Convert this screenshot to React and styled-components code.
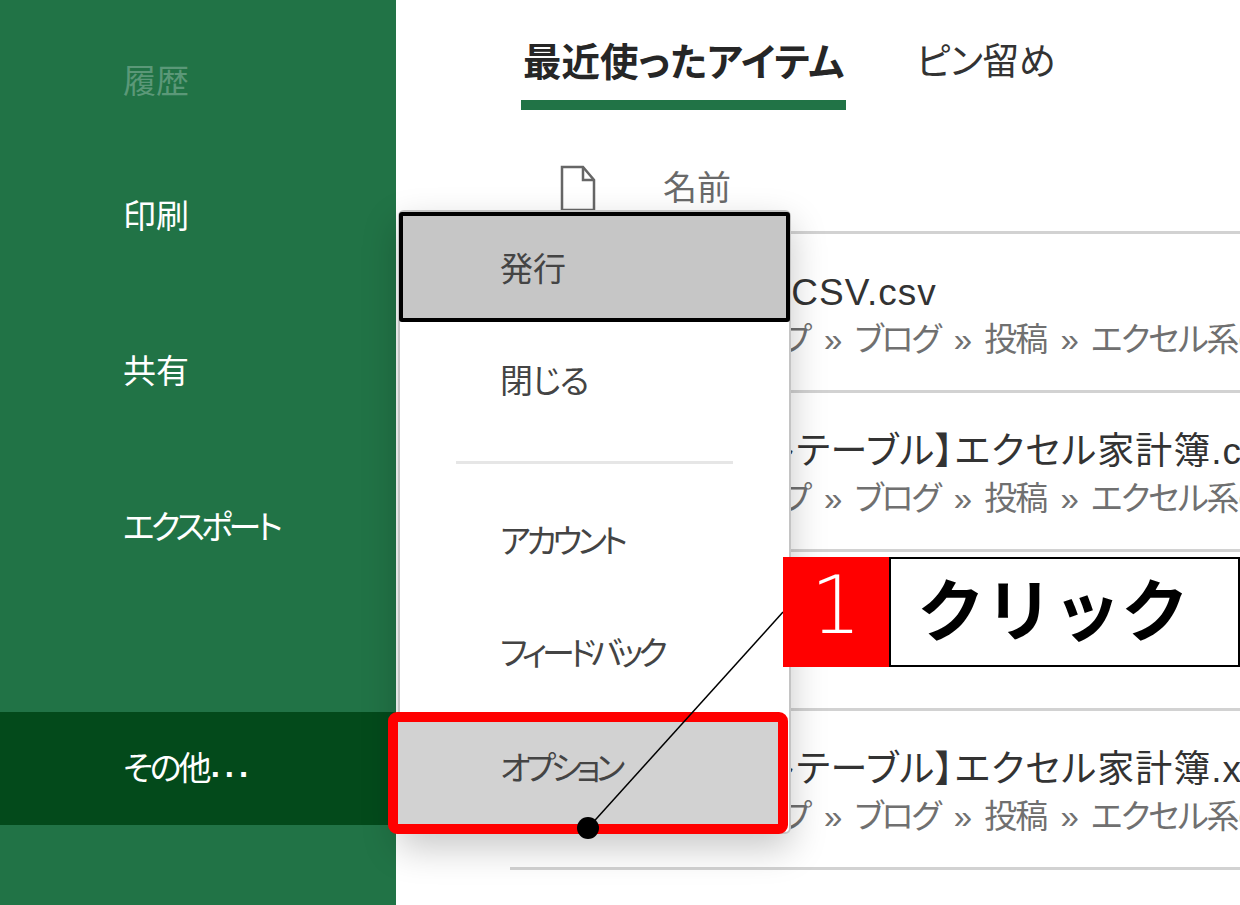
import React from 'react';
import styled, { createGlobalStyle } from 'styled-components';

const Global = createGlobalStyle`
  html, body { margin: 0; padding: 0; background: #fff; }
  * { box-sizing: border-box; }
  body { font-family: "Noto Sans CJK JP", "Noto Sans", sans-serif; font-feature-settings: "palt"; }
`;

const Page = styled.div`
  position: relative;
  display: flex;
  width: 1240px;
  height: 905px;
  overflow: hidden;
  background: #fff;
`;

const Sidebar = styled.nav`
  flex: 0 0 396px;
  display: flex;
  flex-direction: column;
  background: #217346;
`;

const NavItem = styled.div`
  height: 113px;
  flex: none;
  margin-top: ${p => p.$gap}px;
  padding: 0 0 5px 123px;
  display: flex;
  align-items: center;
  font-size: 33px;
  letter-spacing: ${p => p.$track || 0}px;
  white-space: nowrap;
  color: ${p => (p.$disabled ? '#5b9878' : '#fff')};
  background: ${p => (p.$active ? '#034a1b' : 'transparent')};
`;

const Dots = styled.span`
  letter-spacing: 5px;
  margin-left: 2px;
  font-family: "Liberation Sans", sans-serif;
  font-weight: 700;
`;

const Main = styled.main`
  flex: 1;
  min-width: 0;
  display: flex;
  flex-direction: column;
  padding-left: 114px;
`;

const Tabs = styled.div`
  display: flex;
  gap: 68px;
  height: 110px;
  margin-left: 11px;
  flex: none;
`;

const Tab = styled.div`
  height: 110px;
  padding: 33px 2px 0;
  line-height: 52px;
  white-space: nowrap;
  font-size: ${p => (p.$active ? 38.5 : 37)}px;
  letter-spacing: ${p => (p.$active ? 0 : -0.6)}px;
  font-weight: ${p => (p.$active ? 700 : 400)};
  color: ${p => (p.$active ? '#262626' : '#333')};
  border-bottom: ${p => (p.$active ? '10px solid #217346' : 'none')};
`;

const ColumnHead = styled.div`
  flex: none;
  height: 124px;
  padding: 55px 0 0 49px;
  display: flex;
  align-items: flex-start;
  gap: 66px;
  border-bottom: 3px solid #d2d2d2;
`;

const ColumnTitle = styled.span`
  font-size: 34px;
  line-height: 46px;
  margin-top: -2px;
  color: #6a6a6a;
`;

const FileRow = styled.div`
  flex: none;
  height: 159px;
  padding-top: 36px;
  border-bottom: 3px solid #d2d2d2;
  overflow: hidden;
  white-space: nowrap;
`;

const FileName = styled.div`
  font-family: "Liberation Sans", "Noto Sans CJK JP", sans-serif;
  font-size: 37px;
  line-height: 46px;
  letter-spacing: 1px;
  color: #333;
  margin-left: ${p => p.$indent}px;
`;

const FilePath = styled.div`
  font-family: "Liberation Sans", "Noto Sans CJK JP", sans-serif;
  font-size: 33px;
  line-height: 46px;
  margin-top: 1px;
  letter-spacing: -2px;
  word-spacing: 7px;
  color: #707070;
  margin-left: 140px;
`;

const Menu = styled.div`
  position: absolute;
  left: 398px;
  top: 210px;
  width: 393px;
  height: 624px;
  padding-top: 2px;
  background: #fff;
  border: 2px solid #c4c4c4;
  border-radius: 6px;
  box-shadow: 0 14px 36px rgba(0, 0, 0, 0.22);
`;

const MenuItem = styled.div`
  height: ${p => p.$h}px;
  display: flex;
  align-items: center;
  padding-left: 100px;
  font-size: 33px;
  letter-spacing: ${p => p.$track || 0}px;
  color: #444;
  white-space: nowrap;
`;

const FocusItem = styled(MenuItem)`
  margin: -2px -1px 0;
  background: #c6c6c6;
  border: 4px solid #000;
  border-radius: 3px;
  padding-left: 97px;
`;

const PickedItem = styled(MenuItem)`
  margin: 6px 0 0 -12px;
  width: 400px;
  padding: 0 0 14px 102px;
  background: #d2d2d2;
  border: 10px solid #f00;
  border-radius: 9px;
`;

const Separator = styled.hr`
  height: 3px;
  margin: 26px 56px 18px;
  border: 0;
  background: #e6e6e6;
`;

const Callout = styled.div`
  position: absolute;
  left: 783px;
  top: 557px;
  width: 457px;
  height: 110px;
  display: flex;
`;

const StepNumber = styled.div`
  flex: 0 0 106px;
  display: flex;
  align-items: center;
  justify-content: center;
  padding-bottom: 12px;
  background: #f00;
  color: #fff;
  font-family: "DejaVu Sans", sans-serif;
  font-weight: 200;
  font-size: 80px;
  line-height: 1;
`;

const StepText = styled.div`
  flex: 1;
  display: flex;
  align-items: center;
  padding: 0 0 12px 26px;
  background: #fff;
  border: 2px solid #000;
  font-size: 68px;
  font-weight: 700;
  color: #000;
  font-feature-settings: normal;
`;

const Leader = styled.svg`
  position: absolute;
  left: 0;
  top: 0;
  pointer-events: none;
`;

const DocIcon = () => (
  <svg width="38" height="46" viewBox="0 0 38 46" fill="none" stroke="#666" strokeWidth="2.5">
    <path d="M3 2h21l11 13v30H3z" />
    <path d="M24 2v13h11" />
  </svg>
);

const files = [
  { name: 'サンプルCSV.csv', indent: 142, showPath: true },
  { name: '【ピボットテーブル】エクセル家計簿.csv', indent: 135, showPath: true },
  { name: '【ピボットテーブル】エクセル家計簿.xlsx', indent: 135, showPath: false },
  { name: '【ピボットテーブル】エクセル家計簿.xlsx', indent: 135, showPath: true },
];
const path = 'デスクトップ » ブログ » 投稿 » エクセル系のファイル';

export default function App() {
  return (
    <Page>
      <Global />
      <Sidebar>
        <NavItem $gap={25} $disabled>履歴</NavItem>
        <NavItem $gap={22}>印刷</NavItem>
        <NavItem $gap={42}>共有</NavItem>
        <NavItem $gap={43} $track={-4}>エクスポート</NavItem>
        <NavItem $gap={128} $active $track={-3}>その他<Dots>...</Dots></NavItem>
      </Sidebar>
      <Main>
        <Tabs>
          <Tab $active>最近使ったアイテム</Tab>
          <Tab>ピン留め</Tab>
        </Tabs>
        <ColumnHead>
          <DocIcon />
          <ColumnTitle>名前</ColumnTitle>
        </ColumnHead>
        {files.map((f, i) => (
          <FileRow key={i}>
            <FileName $indent={f.indent}>{f.name}</FileName>
            {f.showPath && <FilePath>{path}</FilePath>}
          </FileRow>
        ))}
      </Main>
      <Menu>
        <FocusItem $h={110}>発行</FocusItem>
        <MenuItem $h={113} $track={-1}>閉じる</MenuItem>
        <Separator />
        <MenuItem $h={113} $track={-4.5}>アカウント</MenuItem>
        <MenuItem $h={111} $track={-5}>フィードバック</MenuItem>
        <PickedItem $h={122} $track={-5}>オプション</PickedItem>
      </Menu>
      <Leader width="1240" height="905" viewBox="0 0 1240 905">
        <line x1="783" y1="612" x2="588" y2="828" stroke="#000" strokeWidth="1.5" />
        <circle cx="588" cy="828" r="11" fill="#000" />
      </Leader>
      <Callout>
        <StepNumber>1</StepNumber>
        <StepText>クリック</StepText>
      </Callout>
    </Page>
  );
}
